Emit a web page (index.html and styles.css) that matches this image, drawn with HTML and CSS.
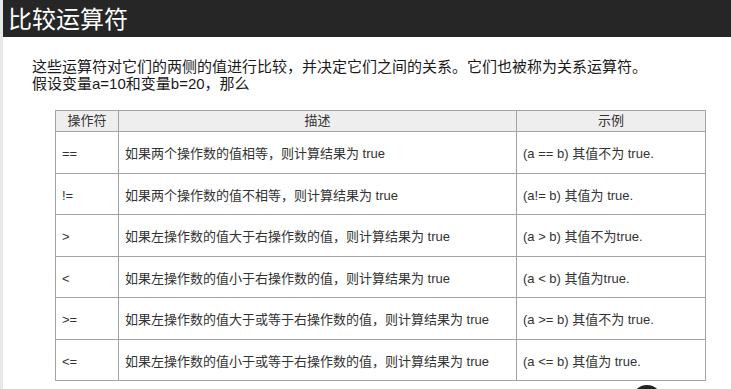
FILE: index.html
```html
<!DOCTYPE html>
<html lang="zh">
<head>
<meta charset="utf-8">
<title>比较运算符</title>
<link rel="stylesheet" href="styles.css">
</head>
<body>
<div class="page">
  <header class="bar"><h1 class="title">比较运算符</h1></header>
  <main class="content">
    <p class="intro">这些运算符对它们的两侧的值进行比较，并决定它们之间的关系。它们也被称为关系运算符。<br>假设变量a=10和变量b=20，那么</p>
    <table class="ops">
      <thead>
        <tr><th class="c1">操作符</th><th class="c2">描述</th><th class="c3">示例</th></tr>
      </thead>
      <tbody>
        <tr><td>==</td><td>如果两个操作数的值相等，则计算结果为 true</td><td>(a == b) 其值不为 true.</td></tr>
        <tr><td>!=</td><td>如果两个操作数的值不相等，则计算结果为 true</td><td>(a!= b) 其值为 true.</td></tr>
        <tr><td>&gt;</td><td>如果左操作数的值大于右操作数的值，则计算结果为 true</td><td>(a &gt; b) 其值不为true.</td></tr>
        <tr><td>&lt;</td><td>如果左操作数的值小于右操作数的值，则计算结果为 true</td><td>(a &lt; b) 其值为true.</td></tr>
        <tr><td>&gt;=</td><td>如果左操作数的值大于或等于右操作数的值，则计算结果为 true</td><td>(a &gt;= b) 其值不为 true.</td></tr>
        <tr><td>&lt;=</td><td>如果左操作数的值小于或等于右操作数的值，则计算结果为 true</td><td>(a &lt;= b) 其值为 true.</td></tr>
      </tbody>
    </table>
  </main>
  <div class="totop"></div>
</div>
</body>
</html>
```
FILE: styles.css
```css
html, body {
  margin: 0;
  padding: 0;
  background: #ffffff;
}
body {
  font-family: "Liberation Sans", "Noto Sans CJK SC", sans-serif;
  color: #222;
  overflow: hidden;
}
.page {
  position: relative;
  height: 389px;
  overflow: hidden;
  border-left: 3px solid #e8e8e8;
}
.bar {
  height: 37px;
  background: #262626;
  display: flex;
  align-items: center;
  padding-left: 5px;
}
.title {
  margin: 0;
  font-family: "Noto Sans CJK SC", sans-serif;
  font-weight: 400;
  font-size: 24px;
  line-height: 28px;
  color: #ffffff;
  margin-top: -2px;
}
.content {
  padding: 21px 0 0 29px;
}
.intro {
  margin: 0;
  font-size: 15px;
  line-height: 17px;
  color: #1a1a1a;
}
.ops {
  margin: 18px 0 0 23px;
  border-collapse: collapse;
  width: 651px;
  font-size: 13px;
  color: #333;
}
.ops th, .ops td {
  border: 1px solid #a3a3a3;
}
.ops th {
  background: #eeeeee;
  font-weight: 400;
  height: 20px;
  padding: 0 6px;
  text-align: center;
  line-height: 16px;
}
.ops td {
  height: 36.5px;
  padding: 4px 6px 0;
  line-height: 16px;
  vertical-align: middle;
}
.c1 { width: 50px; }
.c2 { width: 385px; }
.totop {
  position: absolute;
  left: 629px;
  top: 385px;
  width: 30px;
  height: 30px;
  border-radius: 50%;
  background: #222;
}
```
